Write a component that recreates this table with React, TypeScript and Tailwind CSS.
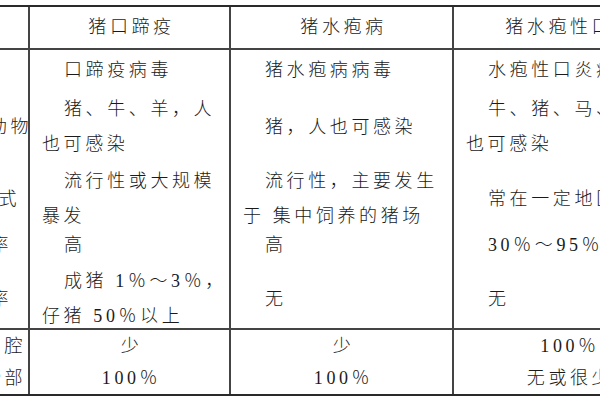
import React from 'react';

type Cell = { lines: string[]; center?: boolean };

const rows: { h: string; label?: { text: string; pr: string }; cells: Cell[]; sep?: boolean }[] = [
  { h: 'h-[40px]', cells: [{ lines: ['口蹄疫病毒'] }, { lines: ['猪水疱病病毒'] }, { lines: ['水疱性口炎病毒'] }] },
  {
    h: 'h-[74px]',
    label: { text: '易感动物', pr: '-mr-[4px]' },
    cells: [{ lines: ['猪、牛、羊，人', '也可感染'] }, { lines: ['猪，人也可感染'] }, { lines: ['牛、猪、马、人', '也可感染'] }],
  },
  {
    h: 'h-[62px]',
    label: { text: '流行方式', pr: 'mr-[8px]' },
    cells: [{ lines: ['流行性或大规模', '暴发'] }, { lines: ['流行性，主要发生', '于 集中饲养的猪场'] }, { lines: ['常在一定地区发生'] }],
  },
  { h: 'h-[38px]', label: { text: '发病率', pr: 'mr-[16px]' }, cells: [{ lines: ['高'] }, { lines: ['高'] }, { lines: ['30％～95％'] }] },
  {
    h: 'h-[66px]',
    sep: true,
    label: { text: '死亡率', pr: 'mr-[16px]' },
    cells: [{ lines: ['成猪 1％～3％，', '仔猪 50％以上'] }, { lines: ['无'] }, { lines: ['无'] }],
  },
  { h: 'h-[32px]', label: { text: '病变在口腔', pr: 'mr-[2px]' }, cells: [{ lines: ['少'], center: true }, { lines: ['少'], center: true }, { lines: ['100％'], center: true }] },
  { h: 'h-[32px]', label: { text: '病变在蹄部', pr: 'mr-[2px]' }, cells: [{ lines: ['100％'], center: true }, { lines: ['100％'], center: true }, { lines: ['无或很少'], center: true }] },
];

const headers = ['猪口蹄疫', '猪水疱病', '猪水疱性口炎'];

const font = { fontFamily: '"Liberation Serif", "Noto Sans CJK SC", serif' };

const App: React.FC = () => {
  return (
    <div className="w-[600px] h-[400px] overflow-hidden bg-white pt-[5px] text-[#1a1a1a]" style={font}>
      <div className="w-[682px] border-t-2 border-b-2 border-[#2a2a2a] text-[18px] font-light tracking-[3.6px]">
        {/* Header */}
        <div className="grid grid-cols-[30px_201px_223px_228px] h-[43px] border-b-2 border-[#444]">
          <div className="border-r-2 border-[#444]" />
          {headers.map((t, i) => (
            <div key={t} className={`flex items-center justify-center whitespace-nowrap pl-[4px] ${i < 2 ? 'border-r-2 border-[#444]' : ''}`}>
              {t}
            </div>
          ))}
        </div>

        {/* Body */}
        {rows.map((r, ri) => (
          <div key={ri} className={`grid grid-cols-[30px_201px_223px_228px] ${r.h} ${r.sep ? 'border-b-2 border-[#444]' : ''}`}>
            <div className="flex items-center justify-end overflow-hidden whitespace-nowrap border-r-2 border-[#444]">
              {r.label && <span className={`shrink-0 ${r.label.pr}`}>{r.label.text}</span>}
            </div>
            {r.cells.map((c, ci) => (
              <div
                key={ci}
                className={`flex flex-col justify-center ${c.center ? 'items-center pl-[4px]' : 'pl-[12px]'} ${ci < 2 ? 'border-r-2 border-[#444]' : ''}`}
              >
                {c.lines.map((l, li) => (
                  <div key={li} className={`whitespace-nowrap ${c.center ? 'leading-[32px]' : 'leading-[35px]'} ${!c.center && li === 0 ? 'pl-[22px]' : ''}`}>
                    {l}
                  </div>
                ))}
              </div>
            ))}
          </div>
        ))}
      </div>
    </div>
  );
};

export default App;
